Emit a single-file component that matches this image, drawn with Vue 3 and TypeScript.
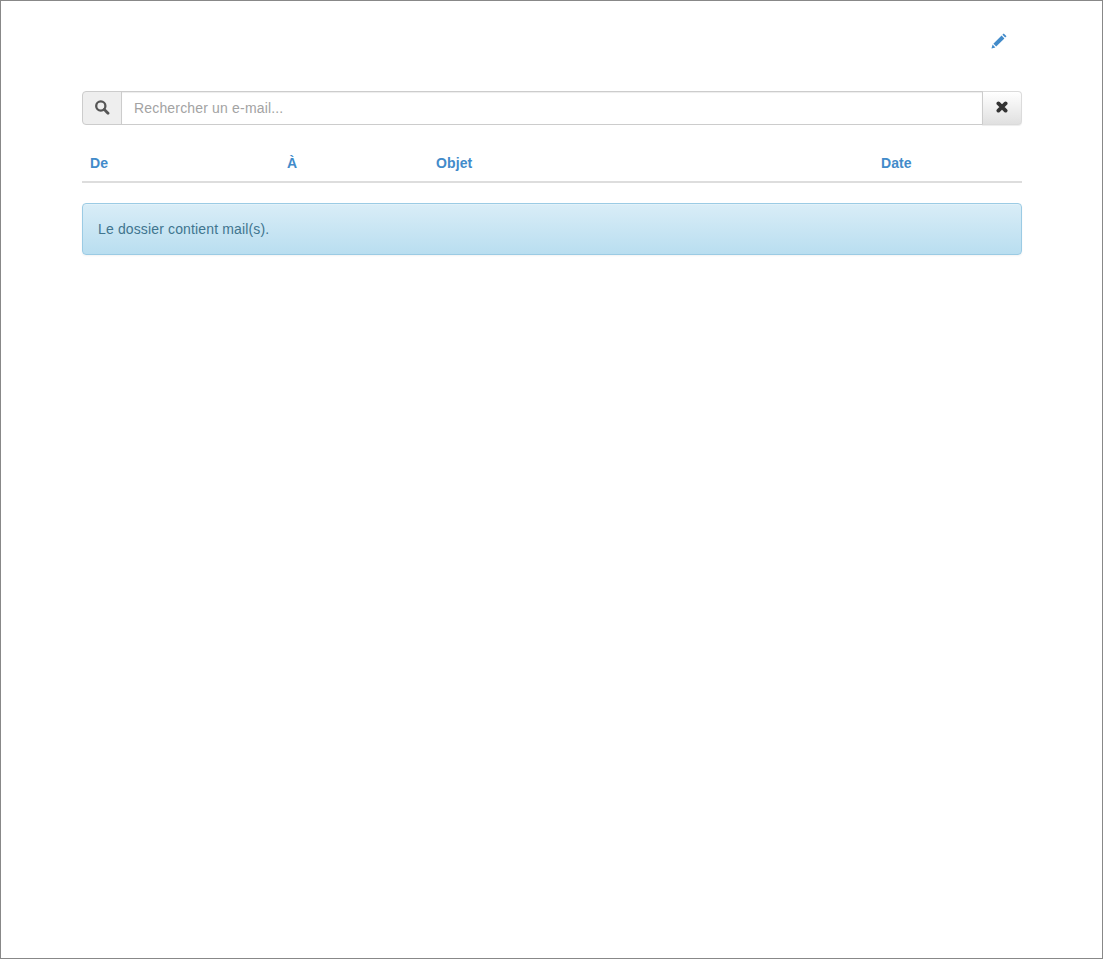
<script setup lang="ts">
const columns: string[] = ['De', 'À', 'Objet', 'Date']
</script>

<template>
  <div class="frame">
    <div class="toolbar">
      <a class="compose" aria-label="Nouveau">
        <svg width="16" height="16" viewBox="0 0 16 16">
          <path d="M0.5 15.5 L1.6 11.6 L4.4 14.4 Z" fill="#428bca" />
          <path d="M2.4 10.8 L10.6 2.6 L13.4 5.4 L5.2 13.6 Z" fill="#428bca" />
          <path d="M11.4 1.8 L12.7 0.5 L15.5 3.3 L14.2 4.6 Z" fill="#428bca" />
        </svg>
      </a>
    </div>
    <div class="search">
      <span class="addon">
        <svg width="15" height="15" viewBox="0 0 15 15">
          <circle cx="5.8" cy="6" r="4.6" fill="none" stroke="#555" stroke-width="2.3" />
          <path d="M9.3 9.5 L13 13.2" stroke="#555" stroke-width="2.8" stroke-linecap="round" />
        </svg>
      </span>
      <input class="field" type="text" placeholder="Rechercher un e-mail..." />
      <button class="clear" type="button" aria-label="Effacer">
        <svg width="13" height="13" viewBox="0 0 13 13">
          <path d="M2.4 2.4 L9.6 9.6 M9.6 2.4 L2.4 9.6" stroke="#333" stroke-width="3.8" stroke-linecap="round" />
        </svg>
      </button>
    </div>
    <div class="thead">
      <div v-for="c in columns" :key="c" class="th">{{ c }}</div>
    </div>
    <div class="alert">Le dossier contient mail(s).</div>
  </div>
</template>

<style>
html, body { margin: 0; background: #fff; }
</style>

<style scoped>
.frame {
  box-sizing: border-box;
  width: 1103px;
  height: 959px;
  border: 1px solid #888;
  padding: 0 80px 0 81px;
  font-family: "Liberation Sans", Arial, sans-serif;
  font-size: 14px;
  line-height: 20px;
  color: #333;
  background: #fff;
}
.toolbar {
  display: flex;
  justify-content: flex-end;
  height: 90px;
  padding: 32px 15px 0 0;
  box-sizing: border-box;
}
.compose { display: block; height: 16px; line-height: 0; }
.search {
  display: flex;
  height: 34px;
}
.addon {
  box-sizing: border-box;
  width: 40px;
  display: flex;
  align-items: center;
  justify-content: center;
  padding-bottom: 1px;
  background: #eee;
  border: 1px solid #ccc;
  border-radius: 4px 0 0 4px;
}
.field {
  flex: 1;
  min-width: 0;
  box-sizing: border-box;
  height: 34px;
  padding: 6px 12px;
  margin: 0 0 0 -1px;
  border: 1px solid #ccc;
  border-radius: 0;
  outline: none;
  font: 14px/20px "Liberation Sans", Arial, sans-serif;
  letter-spacing: 0.17px;
  color: #555;
  background: #fff;
  box-shadow: inset 0 1px 1px rgba(0, 0, 0, 0.075);
}
.field::placeholder { color: #a3a3a3; opacity: 1; }
.clear {
  box-sizing: border-box;
  width: 40px;
  height: 34px;
  margin-left: -1px;
  padding: 0 0 2px;
  display: flex;
  align-items: center;
  justify-content: center;
  border: 1px solid #dbdbdb;
  border-left-color: #ccc;
  border-radius: 0 4px 4px 0;
  background: linear-gradient(to bottom, #fff 0%, #e0e0e0 100%);
  box-shadow: inset 0 1px 0 rgba(255, 255, 255, 0.15), 0 1px 1px rgba(0, 0, 0, 0.075);
}
.thead {
  display: grid;
  grid-template-columns: 197px 149px 445px 149px;
  margin-top: 20px;
  border-bottom: 2px solid #ddd;
}
.th {
  padding: 8px;
  font-weight: bold;
  letter-spacing: 0.1px;
  color: #428bca;
}
.alert {
  box-sizing: border-box;
  height: 52px;
  margin-top: 20px;
  padding: 15px;
  border: 1px solid #9bcbe4;
  border-radius: 4px;
  letter-spacing: 0.14px;
  color: #40758f;
  background: linear-gradient(to bottom, #d9edf7 0%, #b9def0 100%);
  box-shadow: inset 0 1px 0 rgba(255, 255, 255, 0.25), 0 1px 2px rgba(0, 0, 0, 0.05);
}
</style>
